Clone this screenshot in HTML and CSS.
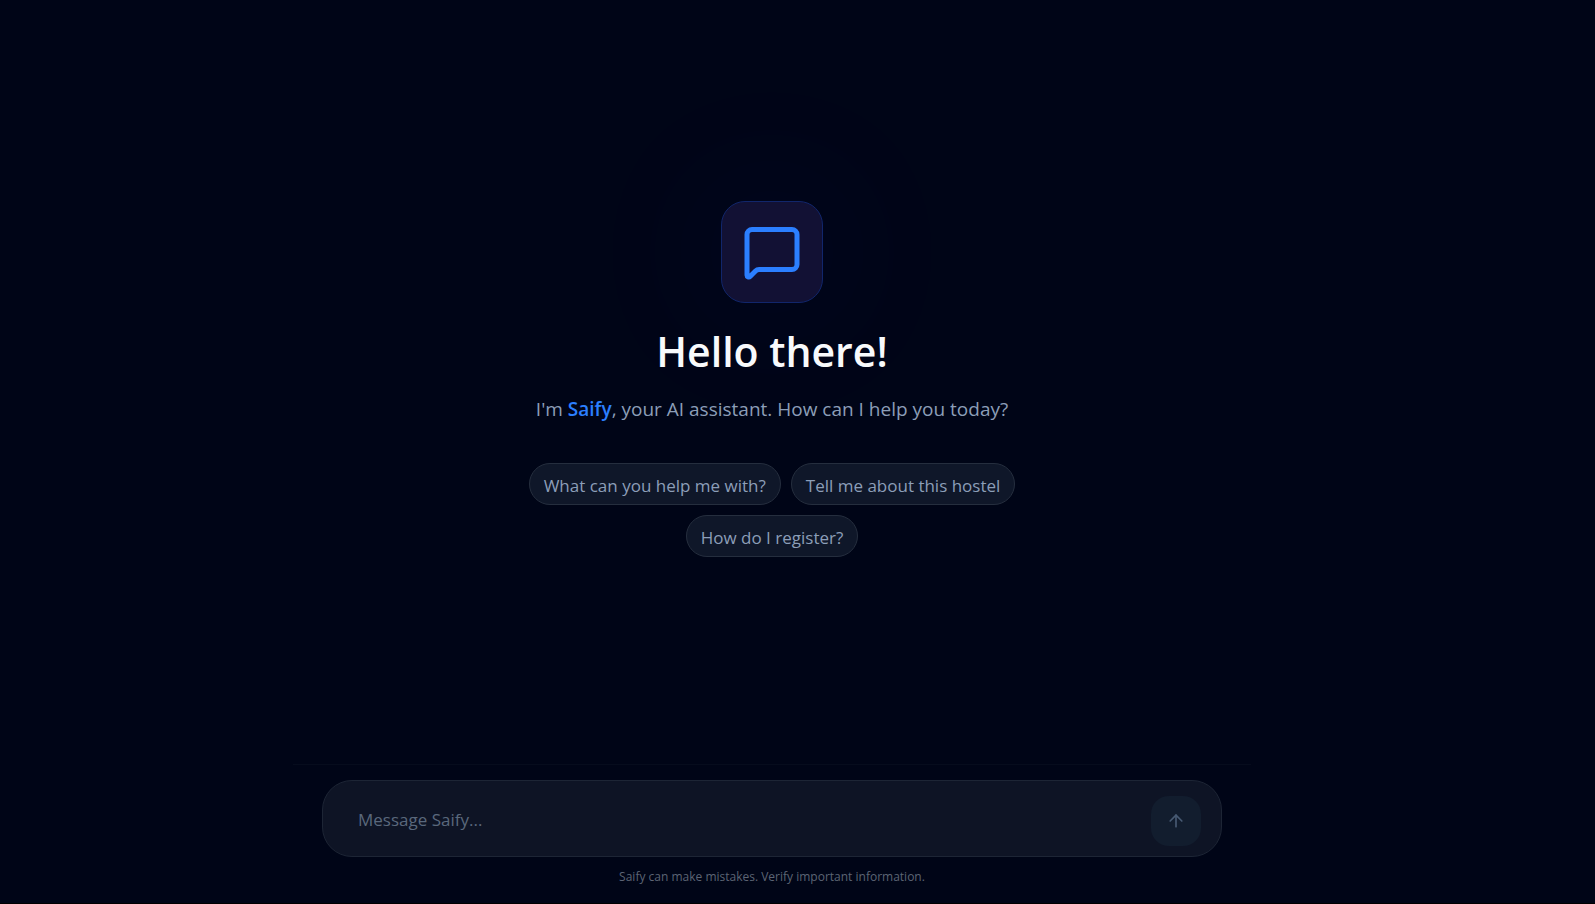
FILE: index.html
```
<!DOCTYPE html>
<html lang="en">
<head>
	<meta charset="utf-8">
	<meta name="viewport" content="width=device-width, initial-scale=1">
	<title>Saify</title>
	<link rel="stylesheet" href="styles.css">
</head>
<body>
	<main class="welcome">
		<div class="logo">
			<svg width="60" height="60" viewBox="0 0 24 24" fill="none" stroke="currentColor" stroke-width="2" stroke-linecap="round" stroke-linejoin="round" aria-hidden="true">
				<path d="M22 17a2 2 0 0 1-2 2H6.828a2 2 0 0 0-1.414.586l-2.202 2.202A.71.71 0 0 1 2 21.286V5a2 2 0 0 1 2-2h16a2 2 0 0 1 2 2z"/>
			</svg>
		</div>
		<h1>Hello there!</h1>
		<p class="intro">I'm <strong>Saify</strong>, your AI assistant. How can I help you today?</p>
		<div class="suggestions">
			<button type="button">What can you help me with?</button>
			<button type="button">Tell me about this hostel</button>
			<button type="button">How do I register?</button>
		</div>
	</main>
	<footer class="composer">
		<form class="message-box">
			<input type="text" id="message" placeholder="Message Saify..." aria-label="Message Saify" autocomplete="off">
			<button type="submit" id="send" aria-label="Send" disabled>
				<svg width="20" height="20" viewBox="0 0 24 24" fill="none" stroke="currentColor" stroke-width="2" stroke-linecap="round" stroke-linejoin="round" aria-hidden="true">
					<path d="m5 12 7-7 7 7"/>
					<path d="M12 19V5"/>
				</svg>
			</button>
		</form>
		<p class="note">Saify can make mistakes. Verify important information.</p>
	</footer>
	<script>
		let message = document.querySelector("#message");
		let send = document.querySelector("#send");
		message.oninput = function() {
			send.disabled = message.value.trim().length == 0;
		};
		for (let button of document.querySelectorAll(".suggestions button")) {
			button.onclick = function() {
				message.value = button.innerText;
				send.disabled = false;
				message.focus();
			};
		}
		document.querySelector("form").onsubmit = function(e) {
			e.preventDefault();
		};
	</script>
</body>
</html>
```
FILE: styles.css
```
:root {
	--bg: #000517;
	--txt: #f8fafc;
	--muted: #8c9eb8;
	--blue: #2b7fff;
}
* {
	box-sizing: border-box;
}
body {
	margin: 0;
	min-height: 100vh;
	padding: 0 51px 0 0;
	display: flex;
	flex-direction: column;
	align-items: center;
	font-family: 'Segoe UI', 'Open Sans', 'Noto Sans', sans-serif;
	background-color: var(--bg);
	color: var(--txt);
	border-bottom: solid 1px black;
}
button, input {
	font-family: inherit;
}
.welcome {
	flex: 1;
	display: flex;
	flex-direction: column;
	align-items: center;
	justify-content: center;
	padding: 0 20px 6px;
	text-align: center;
}
.logo {
	display: grid;
	place-items: center;
	width: 102px;
	height: 102px;
	border: solid 1px #11266b;
	border-radius: 24px;
	background-color: #121134;
	color: var(--blue);
	box-shadow: 0 0 160px 20px rgba(43, 127, 255, 0.05);
}
h1 {
	margin: 20px 0 0;
	font-size: 41px;
	line-height: 56px;
	font-weight: 600;
}
.intro {
	margin: 15px 0 0;
	font-size: 19px;
	line-height: 30px;
	color: var(--muted);
}
.intro strong {
	font-weight: 600;
	color: var(--blue);
}
.suggestions {
	display: flex;
	flex-wrap: wrap;
	justify-content: center;
	gap: 10px;
	max-width: 500px;
	margin-top: 39px;
}
.suggestions button {
	height: 42px;
	padding: 2px 14px 0;
	font-size: 17px;
	color: var(--muted);
	background-color: #0f1729;
	border: solid 1px #252e3e;
	border-radius: 21px;
	cursor: pointer;
}
.suggestions button:hover {
	color: var(--txt);
}
.composer {
	width: 100%;
	max-width: 958px;
	padding: 15px 29px 16px;
	border-top: solid 1px #060c1d;
}
.message-box {
	display: flex;
	align-items: flex-start;
	padding: 15px 20px 10px 35px;
	background-color: #0e1425;
	border: solid 1px #1d2535;
	border-radius: 30px;
}
.message-box input {
	flex: 1;
	min-width: 0;
	height: 46px;
	padding: 0;
	border: none;
	outline: none;
	background: none;
	font-size: 17px;
	color: var(--txt);
}
.message-box input::placeholder {
	color: #5a687c;
	opacity: 1;
}
.message-box button {
	display: grid;
	place-items: center;
	width: 50px;
	height: 50px;
	padding: 0;
	border: none;
	border-radius: 18px;
	background-color: var(--blue);
	color: white;
	cursor: pointer;
}
.message-box button[disabled] {
	background-color: #121d2e;
	color: #475a73;
	cursor: default;
}
.note {
	margin: 10px 0 0;
	font-size: 12px;
	line-height: 20px;
	text-align: center;
	color: #5c6474;
}
```
